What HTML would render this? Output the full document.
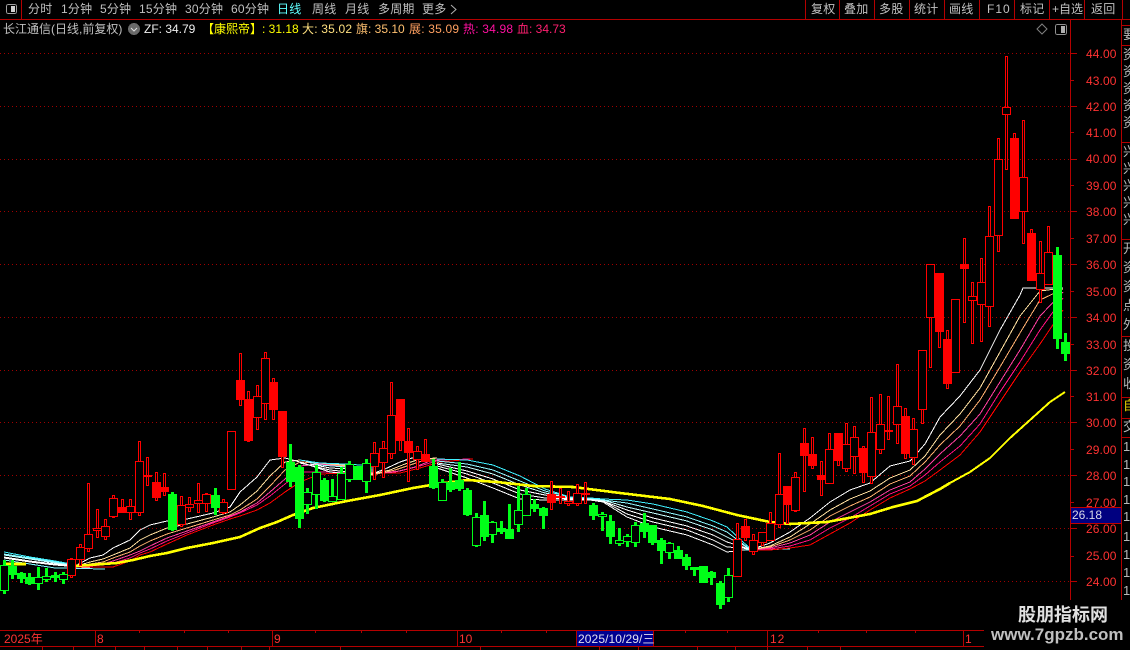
<!DOCTYPE html>
<html lang="zh">
<head>
<meta charset="utf-8">
<title>长江通信</title>
<style>
html,body{margin:0;padding:0;background:#000;}
#p{position:relative;width:1130px;height:650px;background:#000;overflow:hidden;font-family:"Liberation Sans","WenQuanYi Zen Hei","Noto Sans CJK SC",sans-serif;font-size:12px;}
#p svg{position:absolute;left:0;top:0;}
.t{position:absolute;white-space:pre;line-height:14px;}
.m{top:2px;color:#c0c0c0;letter-spacing:.2px;}
.y{left:1086px;color:#ff3232;letter-spacing:.1px;}
.x{top:632px;color:#ff3232;}
.c{left:1123px;color:#b8b8b8;font-size:13px;}
</style>
</head>
<body>
<div id="p">
<svg width="1130" height="650" viewBox="0 0 1130 650" shape-rendering="crispEdges">
<defs><pattern id="d" x="0" y="0" width="4" height="1" patternUnits="userSpaceOnUse"><rect x="0" y="0" width="1" height="1" fill="#a00000"/></pattern></defs>
<g fill="url(#d)">
<rect x="0" y="53" width="1070" height="1"/>
<rect x="0" y="106" width="1070" height="1"/>
<rect x="0" y="159" width="1070" height="1"/>
<rect x="0" y="211" width="1070" height="1"/>
<rect x="0" y="264" width="1070" height="1"/>
<rect x="0" y="317" width="1070" height="1"/>
<rect x="0" y="370" width="1070" height="1"/>
<rect x="0" y="422" width="1070" height="1"/>
<rect x="0" y="475" width="1070" height="1"/>
<rect x="0" y="528" width="1070" height="1"/>
<rect x="0" y="581" width="1070" height="1"/>
</g>
<g fill="none" stroke-linejoin="round">
<!-- section A -->
<polyline stroke="#40f0ff" points="4,552 30,557 55,561 77,565"/>
<polyline stroke="#80f8ff" points="4,554 30,558 55,562 77,566"/>
<polyline stroke="#c0ffff" points="4,555 30,559 55,563 80,566"/>
<polyline stroke="#ffffff" points="4,557 30,561 55,564 85,567"/>
<polyline stroke="#ffffff" points="4,558 30,562 55,565 90,568"/>
<polyline stroke="#80f8ff" points="4,560 30,564 55,568 105,569"/>
<!-- section B -->
<polyline stroke="#ff0000" points="77,567 103,567 113,567 130,561 140,555 150,552 167,544 187,535 213,525 230,519 240,516 257,510 270,503 285,492 300,482 320,474 345,473 375,473 400,473 420,468 440,462 473,459"/>
<polyline stroke="#ff1080" points="77,567 90,566 103,565 113,563 130,558 140,553 150,549 167,541 187,533 213,523 230,517 240,513 257,505 270,496 285,484 300,472 330,472 370,474 400,471 420,466 440,460 470,459"/>
<polyline stroke="#ff40a0" points="77,567 90,565 103,564 113,561 130,555 140,551 150,546 167,538 187,531 213,522 230,516 240,512 257,503 270,492 285,479 300,466 320,464 345,466 370,474 395,472 415,467 430,461 445,459"/>
<polyline stroke="#ffb070" points="77,567 90,564 103,562 113,558 130,552 140,546 150,541 167,534 187,528 213,520 230,515 240,510 257,499 270,486 285,470 300,462 320,463 345,466 372,475 395,470 410,465 425,460 437,458"/>
<polyline stroke="#ffe0a0" points="77,566 90,562 103,559 113,555 130,548 140,540 150,535 167,528 187,524 213,517 230,512 240,505 257,491 270,476 285,462 300,460 320,463 345,465 372,474 390,470 405,464 420,459 437,458"/>
<polyline stroke="#ffffff" points="77,565 90,558 103,555 113,548 130,540 140,530 150,525 167,521 187,519 213,513 230,507 240,492 257,477 270,460 285,458 300,462"/>
<!-- middle -->
<polyline stroke="#40f0ff" points="300,460 320,463 345,464 375,466"/>
<polyline stroke="#a0f8ff" points="305,461 320,465 345,467 375,468"/>
<polyline stroke="#ffffff" points="310,464 330,468 350,469 375,470"/>
<polyline stroke="#ffffff" points="300,463 330,470 350,472 375,472"/>
<polyline stroke="#ffffff" points="300,462 330,472 350,474 372,474 385,469 400,462 412,458 430,458"/>
<!-- section D -->
<polyline stroke="#ffffff" points="437,468 467,478 493,488 520,499 545,500 570,500 590,500 603,502 627,517 653,527 687,535 713,545 727,552 743,550 750,550"/>
<polyline stroke="#ffffff" points="437,466 467,474 493,483 520,494 545,498 570,499 590,500 603,501 627,514 653,522 687,530 713,540 727,547 743,548 750,550"/>
<polyline stroke="#ffffff" points="437,464 467,471 493,479 520,490 545,495 570,499 590,499 603,501 627,510 653,518 687,526 713,535 727,542 743,547 750,549"/>
<polyline stroke="#c8ffff" points="437,463 467,467 493,474 520,485 545,493 570,498 590,499 603,500 627,507 653,513 687,521 713,530 727,537 743,545 750,549"/>
<polyline stroke="#90f8ff" points="437,461 467,464 493,470 520,481 545,491 570,497 590,498 603,500 627,503 653,509 687,517 713,526 727,532 743,544 750,549"/>
<polyline stroke="#40f0ff" points="437,459 467,460 493,465 520,476 545,489 570,497 590,498 603,499 627,500 653,504 687,512 713,521 727,527 743,542 750,548"/>
<!-- section C -->
<polyline stroke="#80f8ff" points="745,550 790,549"/>
<polyline stroke="#ff0000" points="750,550 770,550 790,548 810,545 830,534 850,523 870,510 890,498 910,489 925,481 940,470 960,455 980,432 1000,402 1020,372 1040,344 1063,310"/>
<polyline stroke="#ff1080" points="750,550 770,549 790,546 810,540 830,528 850,518 870,506 890,494 910,486 925,475 940,462 960,446 980,424 1000,392 1020,362 1040,330 1063,298"/>
<polyline stroke="#ff40a0" points="750,550 770,548 790,543 810,535 830,522 850,512 870,502 890,490 910,482 925,469 940,454 960,436 980,414 1000,382 1020,350 1040,316 1063,292"/>
<polyline stroke="#ffb070" points="750,550 770,547 790,540 810,530 830,516 850,506 870,497 890,484 910,476 925,462 940,445 960,426 980,400 1000,367 1020,333 1040,300 1063,289"/>
<polyline stroke="#ffe0a0" points="750,550 770,546 790,537 810,524 830,510 850,499 870,491 890,478 910,470 925,456 940,435 960,414 980,388 1000,352 1020,316 1040,291 1063,288"/>
<polyline stroke="#ffffff" points="750,550 770,543 790,532 810,518 830,502 850,490 870,483 890,466 910,461 925,444 940,417 960,396 980,370 1000,330 1020,295 1023,288 1063,288"/>
</g>
<polyline fill="none" stroke="#ffff00" stroke-width="2.6" points="5,564 26,564"/>
<polyline fill="none" stroke="#ffff00" stroke-width="2.6" stroke-linejoin="round" points="75,566 117,563 133,560 150,556 167,553 187,548 213,543 240,537 260,528 277,522 293,515 313,508 347,501 380,495 413,488 437,484 467,480 497,482 533,486 573,487 620,493 670,499 703,506 737,515 770,522 790,524 827,522 870,514 893,507 917,501 940,489 950,483"/>
<polyline fill="none" stroke="#ffff00" stroke-width="2" stroke-linejoin="round" points="950,483 970,472 990,458 1010,438 1020,429 1030,420 1050,402 1065,392"/>
<g transform="translate(.5 .5)">
<path fill="#00ff18" stroke="#00ff18" d="M3 560h2V593h-2zM11 560h2V578h-2zM20 572h2V582h-2zM28 573h2V584h-2zM37 567h2V589h-2zM45 568h2V581h-2zM54 572h2V581h-2zM62 572h2V583h-2zM171 492h2V530h-2zM214 488h2V514h-2zM289 444h2V486h-2zM298 465h2V527h-2zM306 488h2V513h-2zM315 465h2V508h-2zM323 478h2V501h-2zM331 479h2V501h-2zM340 467h2V499h-2zM348 461h2V481h-2zM365 459h2V492h-2zM432 459h2V488h-2zM441 479h2V500h-2zM449 468h2V491h-2zM458 462h2V490h-2zM466 488h2V515h-2zM475 513h2V546h-2zM483 501h2V540h-2zM491 521h2V542h-2zM500 521h2V533h-2zM508 504h2V538h-2zM517 486h2V531h-2zM525 488h2V515h-2zM533 499h2V511h-2zM542 507h2V528h-2zM592 503h2V519h-2zM601 512h2V530h-2zM609 515h2V543h-2zM618 528h2V545h-2zM626 534h2V546h-2zM634 522h2V546h-2zM643 513h2V537h-2zM651 525h2V544h-2zM660 538h2V563h-2zM668 542h2V558h-2zM677 546h2V558h-2zM685 554h2V569h-2zM693 567h2V575h-2zM710 571h2V584h-2zM719 581h2V608h-2zM727 568h2V601h-2zM1056 247h2V348h-2zM1064 333h2V360h-2z"/>
<path fill="#000" stroke="#ff0000" d="M70 558h2V577h-2zM79 544h2V565h-2zM87 483h2V551h-2zM96 509h2V537h-2zM104 519h2V539h-2zM112 495h2V517h-2zM121 499h2V512h-2zM129 499h2V519h-2zM138 441h2V515h-2zM146 457h2V485h-2zM155 472h2V500h-2zM163 473h2V495h-2zM180 496h2V526h-2zM188 497h2V511h-2zM197 483h2V512h-2zM205 493h2V511h-2zM222 499h2V513h-2zM239 353h2V405h-2zM247 391h2V441h-2zM256 385h2V429h-2zM264 352h2V419h-2zM272 378h2V419h-2zM281 411h2V467h-2zM373 442h2V479h-2zM382 441h2V477h-2zM390 382h2V458h-2zM399 399h2V450h-2zM407 428h2V481h-2zM416 446h2V469h-2zM424 439h2V461h-2zM550 481h2V509h-2zM559 488h2V503h-2zM567 491h2V505h-2zM576 484h2V505h-2zM584 482h2V503h-2zM736 523h2V576h-2zM744 519h2V540h-2zM752 534h2V554h-2zM761 532h2V545h-2zM769 512h2V540h-2zM778 453h2V527h-2zM786 486h2V523h-2zM794 472h2V511h-2zM803 428h2V491h-2zM811 437h2V468h-2zM820 461h2V495h-2zM828 433h2V483h-2zM837 433h2V465h-2zM845 423h2V471h-2zM853 426h2V473h-2zM862 446h2V482h-2zM870 397h2V483h-2zM879 394h2V453h-2zM887 396h2V439h-2zM896 364h2V443h-2zM904 408h2V458h-2zM912 418h2V464h-2zM921 350h2V423h-2zM929 264h2V367h-2zM938 273h2V347h-2zM946 330h2V388h-2zM963 238h2V322h-2zM971 282h2V343h-2zM980 258h2V341h-2zM988 206h2V326h-2zM997 138h2V251h-2zM1005 56h2V169h-2zM1013 133h2V218h-2zM1022 120h2V243h-2zM1030 229h2V280h-2zM1039 241h2V302h-2zM1047 226h2V284h-2z"/>
<path fill="#000" stroke="#ff0000" d="M67 559h8V575h-8zM76 547h8V559h-8zM84 534h8V548h-8zM93 528h8V530h-8zM101 526h8V536h-8zM109 498h8V516h-8zM126 506h8V512h-8zM135 461h8V512h-8zM143 475h8V476h-8zM177 505h8V524h-8zM185 504h8V507h-8zM194 500h8V503h-8zM202 494h8V503h-8zM219 502h8V512h-8zM227 431h8V489h-8zM253 396h8V417h-8zM261 358h8V403h-8zM370 453h8V466h-8zM379 448h8V462h-8zM387 415h8V453h-8zM413 451h8V459h-8zM556 496h8V497h-8zM564 501h8V503h-8zM573 493h8V503h-8zM581 493h8V494h-8zM733 539h8V576h-8zM749 540h8V551h-8zM758 532h8V542h-8zM766 523h8V540h-8zM775 494h8V524h-8zM791 477h8V510h-8zM825 449h8V483h-8zM842 444h8V468h-8zM850 437h8V456h-8zM867 432h8V476h-8zM876 424h8V449h-8zM893 406h8V424h-8zM909 429h8V457h-8zM918 350h8V409h-8zM926 264h8V317h-8zM951 299h8V372h-8zM968 296h8V300h-8zM977 282h8V304h-8zM985 236h8V306h-8zM994 159h8V235h-8zM1002 107h8V114h-8zM1019 177h8V211h-8zM1036 273h8V289h-8zM1044 252h8V284h-8z"/>
<path fill="#ff0000" stroke="#ff0000" d="M118 507h8V512h-8zM152 482h8V497h-8zM160 487h8V491h-8zM236 380h8V399h-8zM244 399h8V440h-8zM269 382h8V409h-8zM278 411h8V456h-8zM396 399h8V440h-8zM404 441h8V452h-8zM421 454h8V461h-8zM547 494h8V502h-8zM741 526h8V537h-8zM783 486h8V504h-8zM800 443h8V455h-8zM808 454h8V465h-8zM817 475h8V479h-8zM834 433h8V460h-8zM859 448h8V472h-8zM884 430h8V431h-8zM901 416h8V453h-8zM935 273h8V331h-8zM943 339h8V383h-8zM960 264h8V268h-8zM1010 138h8V218h-8zM1027 233h8V280h-8z"/>
<path fill="#000" stroke="#00ff18" d="M0 565h8V590h-8zM34 577h8V583h-8zM42 576h8V579h-8zM59 574h8V579h-8zM303 492h8V504h-8zM312 472h8V494h-8zM328 496h8V501h-8zM337 473h8V499h-8zM345 464h8V479h-8zM362 463h8V481h-8zM438 482h8V500h-8zM472 517h8V545h-8zM488 522h8V534h-8zM514 510h8V524h-8zM522 494h8V515h-8zM598 514h8V516h-8zM615 540h8V543h-8zM623 536h8V541h-8zM631 525h8V542h-8zM665 543h8V552h-8zM724 575h8V597h-8z"/>
<path fill="#00ff18" stroke="#00ff18" d="M8 566h8V574h-8zM17 573h8V578h-8zM25 577h8V583h-8zM51 575h8V577h-8zM168 494h8V529h-8zM211 495h8V507h-8zM286 462h8V481h-8zM295 467h8V518h-8zM320 480h8V500h-8zM354 466h8V479h-8zM429 466h8V487h-8zM446 482h8V489h-8zM455 480h8V488h-8zM463 490h8V514h-8zM480 515h8V536h-8zM497 528h8V531h-8zM505 529h8V538h-8zM530 504h8V508h-8zM539 508h8V515h-8zM589 505h8V515h-8zM606 521h8V536h-8zM640 523h8V531h-8zM648 525h8V542h-8zM657 540h8V550h-8zM674 550h8V558h-8zM682 557h8V565h-8zM690 567h8V569h-8zM699 566h8V582h-8zM707 572h8V577h-8zM716 583h8V604h-8zM1053 255h8V338h-8zM1061 342h8V353h-8z"/>
</g>
<g fill="none" stroke="#b40000">
<path d="M0 19.5H1130M21.5 0V19M805.5 0V19M839.5 0V19M874.5 0V19M909.5 0V19M944.5 0V19M979.5 0V19M1014.5 0V19M1049.5 0V19M1084.5 0V19M1122.5 0V19"/>
<path d="M1070.5 20V630"/>
<path d="M1121.5 20V600"/>
<path d="M1071 53.5h6M1071 80.5h3M1071 106.5h6M1071 132.5h3M1071 159.5h6M1071 185.5h3M1071 211.5h6M1071 238.5h3M1071 264.5h6M1071 291.5h3M1071 317.5h6M1071 344.5h3M1071 370.5h6M1071 396.5h3M1071 422.5h6M1071 449.5h3M1071 475.5h6M1071 502.5h3M1071 528.5h6M1071 556.5h3M1071 581.5h6"/>
<path d="M1122 25.5h8M1122 45.5h8M1122 142.5h8M1122 239.5h8M1122 336.5h8M1122 397.5h8M1122 418.5h8M1122 437.5h8"/>
<path d="M0 630.5H1070M0 646.5H1070M95.5 631V646M272.5 631V646M457.5 631V646M767.5 631V646M963.5 631V646"/>
<path d="M139.5 631v2M184.5 631v2M228.5 631v2M315.5 631v2M361.5 631v2M406.5 631v2M501.5 631v2M546.5 631v2M685.5 631v2M727.5 631v2M818.5 631v2M866.5 631v2M915.5 631v2M1026.5 631v2"/>
<path d="M42.5 647v3M73.5 647v3M115.5 647v3M144.5 647v3M177.5 647v3M207.5 647v3M241.5 647v3M269.5 647v3M340.5 647v3M480.5 647v3M599.5 647v3M638.5 647v3M697.5 647v3M735.5 647v3M767.5 647v3M807.5 647v3M840.5 647v3"/>
</g>
<rect x="577" y="631" width="77" height="15" fill="#000090"/>
<path d="M653.5 631V646M576.5 631V646" stroke="#b40000"/>
<rect x="1071" y="508" width="50" height="15" fill="#000080"/>
<path d="M1071 507.5h50M1071 523.5h50" stroke="#c00000"/>
<rect x="6.5" y="4.5" width="10" height="9" rx="2" fill="none" stroke="#a0a0a0"/>
<rect x="11" y="6" width="4" height="6" fill="#d0d0d0"/>
<path d="M451 5l5 4.5-5 4.5" fill="none" stroke="#b0b0b0" shape-rendering="auto"/>
<circle cx="134" cy="29" r="6" fill="#6a6a6a"/>
<path d="M131 28l3 3 3-3" fill="none" stroke="#e0e0e0" shape-rendering="auto"/>
<path d="M1042 24l5 5-5 5-5-5z" fill="none" stroke="#808080" shape-rendering="auto"/>
<rect x="1055.5" y="24.5" width="11" height="10" rx="2" fill="none" stroke="#909090"/>
<rect x="1061" y="26" width="4" height="7" fill="#b0b0b0"/>
</svg>

<span class="t m" style="left:28px">分时</span>
<span class="t m" style="left:61px">1分钟</span>
<span class="t m" style="left:100px">5分钟</span>
<span class="t m" style="left:139px">15分钟</span>
<span class="t m" style="left:185px">30分钟</span>
<span class="t m" style="left:231px">60分钟</span>
<span class="t m" style="left:277px;color:#60ffff">日线</span>
<span class="t m" style="left:312px">周线</span>
<span class="t m" style="left:345px">月线</span>
<span class="t m" style="left:378px">多周期</span>
<span class="t m" style="left:422px">更多</span>

<span class="t m" style="left:811px">复权</span>
<span class="t m" style="left:844px">叠加</span>
<span class="t m" style="left:879px">多股</span>
<span class="t m" style="left:914px">统计</span>
<span class="t m" style="left:949px">画线</span>
<span class="t m" style="left:987px;letter-spacing:1px">F10</span>
<span class="t m" style="left:1020px">标记</span>
<span class="t m" style="left:1052px;letter-spacing:0">+自选</span>
<span class="t m" style="left:1091px">返回</span>

<span class="t" style="left:3px;top:22px;color:#c0c0c0">长江通信(日线,前复权)</span>
<span class="t" style="left:144px;top:22px;color:#f0f0f0">ZF: 34.79</span>
<span class="t" style="left:202px;top:22px;color:#ffff00">【康熙帝】: 31.18</span>
<span class="t" style="left:302px;top:22px;color:#ffe080;letter-spacing:.2px">大: 35.02</span>
<span class="t" style="left:356px;top:22px;color:#ffc070">旗: 35.10</span>
<span class="t" style="left:409px;top:22px;color:#ffa060;letter-spacing:.2px">展: 35.09</span>
<span class="t" style="left:463px;top:22px;color:#ff10a0;letter-spacing:.2px">热: 34.98</span>
<span class="t" style="left:517px;top:22px;color:#ff2070">血: 34.73</span>

<span class="t y" style="top:47px">44.00</span>
<span class="t y" style="top:74px">43.00</span>
<span class="t y" style="top:100px">42.00</span>
<span class="t y" style="top:126px">41.00</span>
<span class="t y" style="top:152px">40.00</span>
<span class="t y" style="top:179px">39.00</span>
<span class="t y" style="top:205px">38.00</span>
<span class="t y" style="top:232px">37.00</span>
<span class="t y" style="top:258px">36.00</span>
<span class="t y" style="top:285px">35.00</span>
<span class="t y" style="top:311px">34.00</span>
<span class="t y" style="top:338px">33.00</span>
<span class="t y" style="top:364px">32.00</span>
<span class="t y" style="top:390px">31.00</span>
<span class="t y" style="top:416px">30.00</span>
<span class="t y" style="top:443px">29.00</span>
<span class="t y" style="top:469px">28.00</span>
<span class="t y" style="top:496px">27.00</span>
<span class="t y" style="top:522px">26.00</span>
<span class="t y" style="top:549px">25.00</span>
<span class="t y" style="top:575px">24.00</span>
<span class="t" style="left:1072px;top:508px;color:#d8d8e8">26.18</span>

<span class="t x" style="left:4px">2025年</span>
<span class="t x" style="left:97px">8</span>
<span class="t x" style="left:274px">9</span>
<span class="t x" style="left:459px">10</span>
<span class="t x" style="left:770px;letter-spacing:1px">12</span>
<span class="t x" style="left:965px">1</span>
<span class="t x" style="left:578px;color:#e0e0f0;letter-spacing:.1px">2025/10/29/三</span>

<div style="position:absolute;left:1122px;top:26px;width:8px;height:574px;overflow:hidden">
<span class="t c" style="left:1px;top:2px">要</span>
<span class="t c" style="left:1px;top:22px">资</span>
<span class="t c" style="left:1px;top:39px">资</span>
<span class="t c" style="left:1px;top:56px">资</span>
<span class="t c" style="left:1px;top:73px">资</span>
<span class="t c" style="left:1px;top:90px">资</span>
<span class="t c" style="left:1px;top:119px">兴</span>
<span class="t c" style="left:1px;top:136px">兴</span>
<span class="t c" style="left:1px;top:153px">兴</span>
<span class="t c" style="left:1px;top:170px">兴</span>
<span class="t c" style="left:1px;top:187px">兴</span>
<span class="t c" style="left:1px;top:216px">开</span>
<span class="t c" style="left:1px;top:235px">资</span>
<span class="t c" style="left:1px;top:254px">资</span>
<span class="t c" style="left:1px;top:273px">点</span>
<span class="t c" style="left:1px;top:292px">外</span>
<span class="t c" style="left:1px;top:313px">投</span>
<span class="t c" style="left:1px;top:332px">资</span>
<span class="t c" style="left:1px;top:351px">收</span>
<span class="t c" style="left:1px;top:373px;color:#e8d000">自</span>
<span class="t c" style="left:1px;top:394px">交</span>
<span class="t c" style="left:1px;top:414px">1</span>
<span class="t c" style="left:1px;top:432px">1</span>
<span class="t c" style="left:1px;top:449px">1</span>
<span class="t c" style="left:1px;top:467px">1</span>
<span class="t c" style="left:1px;top:484px">1</span>
<span class="t c" style="left:1px;top:504px">1</span>
<span class="t c" style="left:1px;top:522px">1</span>
<span class="t c" style="left:1px;top:540px">1</span>
<span class="t c" style="left:1px;top:558px">1</span>
</div>

<div style="position:absolute;left:984px;top:600px;width:146px;height:50px;background:#000"></div>
<span class="t" style="left:1018px;top:602px;font:bold 18px/24px 'Noto Sans CJK SC','WenQuanYi Zen Hei',sans-serif;color:#e0e0e0">股朋指标网</span>
<span class="t" style="left:991px;top:625px;font:bold 17px/20px 'Liberation Sans',sans-serif;color:#c0c0c0">www.7gpzb.com</span>
</div>
</body>
</html>
